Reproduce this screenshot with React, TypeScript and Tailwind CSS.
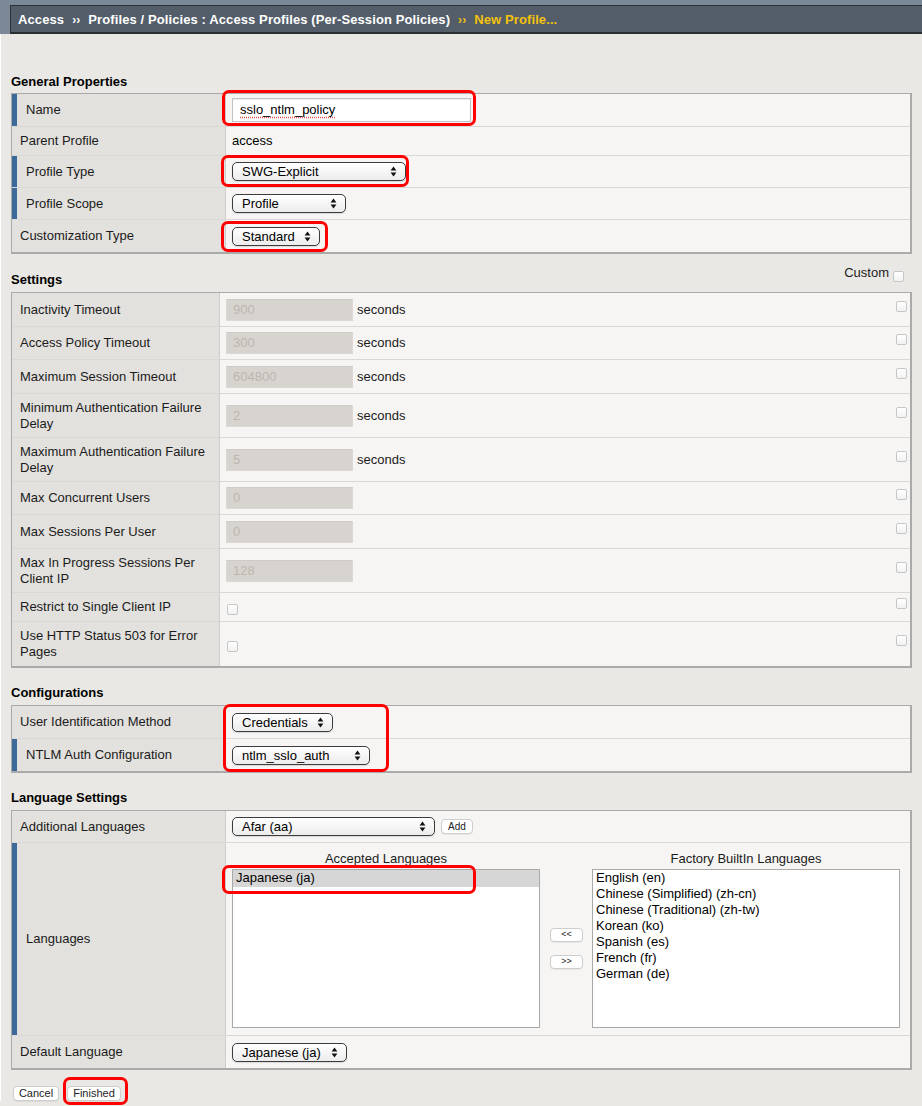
import React from "react";

const Arrows = () => (
  <svg width="7" height="11" viewBox="0 0 7 11" className="shrink-0">
    <path d="M0.6 4.6 L3.5 0.6 L6.4 4.6Z M0.6 6.4 L3.5 10.4 L6.4 6.4Z" fill="#111" />
  </svg>
);

function Select({ value, w }: { value: string; w: string }) {
  return (
    <div
      className={`${w} h-[19px] rounded-[5px] border border-[#3c3c3c] bg-gradient-to-b from-white to-[#ececec] flex items-center justify-between pl-[9px] pr-[8px] shadow-[0_1px_1px_rgba(0,0,0,0.12)]`}
    >
      <span className="leading-none">{value}</span>
      <Arrows />
    </div>
  );
}

const RedBox = ({ cls }: { cls: string }) => (
  <div className={`absolute border-[3px] border-[#ff0000] rounded-[7px] pointer-events-none ${cls}`} />
);

function Row({
  label,
  marked,
  h,
  lw,
  last,
  children,
  valueCls,
}: {
  label: React.ReactNode;
  marked?: boolean;
  h: string;
  lw: string;
  last?: boolean;
  children?: React.ReactNode;
  valueCls?: string;
}) {
  return (
    <div className={`flex ${h} ${last ? "" : "border-b border-[#d8d8d6]"}`}>
      <div
        className={`${lw} shrink-0 bg-[#e2e1dd] border-r border-[#cdcdcb] flex items-center leading-[16px] text-[#1b1b1b] ${
          marked ? "border-l-[5px] border-l-[#3b6a9b] pl-[9px]" : "pl-[8px]"
        }`}
      >
        <div>{label}</div>
      </div>
      <div className={`flex-1 bg-[#f6f5f3] flex pl-[6px] ${valueCls ?? "items-center"}`}>{children}</div>
    </div>
  );
}

const Chk = ({ cls }: { cls?: string }) => (
  <div className={`w-[11px] h-[11px] rounded-[2px] border border-[#c6c6c6] bg-gradient-to-b from-white to-[#f1f1f1] ${cls ?? ""}`} />
);

const Disabled = ({ v, seconds }: { v: string; seconds?: boolean }) => (
  <div className="flex items-center">
    <div className="w-[127px] h-[22px] bg-[#d7d4cf] border border-[#dcd9d4] border-t-[#cfccc7] text-[#bbb7b1] pl-[6px] flex items-center">
      {v}
    </div>
    {seconds && <span className="ml-[4px] text-[#1b1b1b]">seconds</span>}
  </div>
);

const SRow = ({
  label,
  h,
  v,
  seconds,
  last,
  chk,
}: {
  label: React.ReactNode;
  h: string;
  v?: string;
  seconds?: boolean;
  last?: boolean;
  chk?: boolean;
}) => (
  <Row label={label} h={h} lw="w-[208px]" last={last}>
    {v !== undefined && <Disabled v={v} seconds={seconds} />}
    {chk && <Chk cls="ml-[1px] mt-[5px]" />}
    <Chk cls="ml-auto mr-[3px] -mt-[7px]" />
  </Row>
);

const SmallBtn = ({ children, cls }: { children: React.ReactNode; cls: string }) => (
  <div
    className={`${cls} rounded-[4px] border border-[#cdcdcd] bg-white flex items-center justify-center text-[#222] shadow-[0_1px_0_rgba(0,0,0,0.05)]`}
  >
    {children}
  </div>
);

export default function App() {
  const factory = [
    "English (en)",
    "Chinese (Simplified) (zh-cn)",
    "Chinese (Traditional) (zh-tw)",
    "Korean (ko)",
    "Spanish (es)",
    "French (fr)",
    "German (de)",
  ];
  return (
    <div className="w-[922px] min-h-[1106px] bg-[#e9e8e4] font-['Liberation_Sans',Arial,sans-serif] text-[13px] text-black">
      {/* Header */}
      <div className="h-[34px] bg-[#7b8898] pt-[5px] pl-[10px]">
        <div className="h-[29px] bg-[#535e6a] border-t border-l border-[#2e3338] border-b-2 border-b-[#2b2e31] flex items-center pl-[7px] pt-[2px] font-bold text-white text-[13px] tracking-[0.1px] whitespace-nowrap">
          <span>Access</span>
          <span className="mx-[8px] text-[12px]">››</span>
          <span>Profiles / Policies : Access Profiles (Per-Session Policies)</span>
          <span className="mx-[8px] text-[12px] text-[#f4c20d]">››</span>
          <span className="text-[#f4c20d]">New Profile...</span>
        </div>
      </div>

      <div className="border-l border-white">
        {/* General Properties */}
        <div className="pl-[10px] pt-[40px] pb-[3px] font-bold leading-[16px]">General Properties</div>
        <div className="mx-[10px] border border-[#aaaaaa] border-r-2 border-b-2">
          <Row label="Name" marked h="h-[33px]" lw="w-[214px]">
            <div className="relative">
              <div className="w-[239px] h-[24px] bg-white border border-[#c3c3c3] shadow-[inset_0_1px_1px_rgba(0,0,0,0.08)] flex items-center pl-[7px]">
                <span className="underline decoration-dotted decoration-[#e25555] underline-offset-[3px]">sslo_ntlm_policy</span>
              </div>
              <RedBox cls="-left-[10px] -top-[8px] w-[254px] h-[36px]" />
            </div>
          </Row>
          <Row label="Parent Profile" h="h-[29px]" lw="w-[214px]">
            <span>access</span>
          </Row>
          <Row label="Profile Type" marked h="h-[32px]" lw="w-[214px]">
            <div className="relative">
              <Select value="SWG-Explicit" w="w-[174px]" />
              <RedBox cls="-left-[11px] -top-[7px] w-[188px] h-[32px]" />
            </div>
          </Row>
          <Row label="Profile Scope" marked h="h-[32px]" lw="w-[214px]">
            <Select value="Profile" w="w-[114px]" />
          </Row>
          <Row label="Customization Type" h="h-[32px]" lw="w-[214px]" last>
            <div className="relative">
              <Select value="Standard" w="w-[88px]" />
              <RedBox cls="-left-[11px] -top-[6px] w-[107px] h-[31px]" />
            </div>
          </Row>
        </div>

        {/* Settings */}
        <div className="flex justify-between pl-[10px] pr-[18px] pt-[18px] pb-[4px]">
          <div className="font-bold leading-[16px]">Settings</div>
          <div className="flex items-center -mt-[7px] h-[16px]">
            <span className="text-[#1b1b1b]">Custom</span>
            <Chk cls="ml-[4px] mt-[6px]" />
          </div>
        </div>
        <div className="mx-[10px] border border-[#aaaaaa] border-r-2 border-b-2">
          <SRow label="Inactivity Timeout" h="h-[34px]" v="900" seconds />
          <SRow label="Access Policy Timeout" h="h-[33px]" v="300" seconds />
          <SRow label="Maximum Session Timeout" h="h-[34px]" v="604800" seconds />
          <SRow
            label={
              <>
                Minimum Authentication Failure
                <br />
                Delay
              </>
            }
            h="h-[44px]"
            v="2"
            seconds
          />
          <SRow
            label={
              <>
                Maximum Authentication Failure
                <br />
                Delay
              </>
            }
            h="h-[44px]"
            v="5"
            seconds
          />
          <SRow label="Max Concurrent Users" h="h-[33px]" v="0" />
          <SRow label="Max Sessions Per User" h="h-[34px]" v="0" />
          <SRow
            label={
              <>
                Max In Progress Sessions Per
                <br />
                Client IP
              </>
            }
            h="h-[44px]"
            v="128"
          />
          <SRow label="Restrict to Single Client IP" h="h-[29px]" chk />
          <SRow
            label={
              <>
                Use HTTP Status 503 for Error
                <br />
                Pages
              </>
            }
            h="h-[44px]"
            chk
            last
          />
        </div>

        {/* Configurations */}
        <div className="pl-[10px] pt-[17px] pb-[4px] font-bold leading-[16px]">Configurations</div>
        <div className="relative mx-[10px] border border-[#aaaaaa] border-r-2 border-b-2">
          <Row label="User Identification Method" h="h-[33px]" lw="w-[214px]">
            <Select value="Credentials" w="w-[101px]" />
          </Row>
          <Row label="NTLM Auth Configuration" marked h="h-[32px]" lw="w-[214px]" last>
            <Select value="ntlm_sslo_auth" w="w-[138px]" />
          </Row>
          <RedBox cls="left-[211px] -top-[2px] w-[166px] h-[68px]" />
        </div>

        {/* Language Settings */}
        <div className="pl-[10px] pt-[17px] pb-[4px] font-bold leading-[16px]">Language Settings</div>
        <div className="mx-[10px] border border-[#aaaaaa] border-r-2 border-b-2">
          <Row label="Additional Languages" h="h-[32px]" lw="w-[214px]">
            <Select value="Afar (aa)" w="w-[203px]" />
            <SmallBtn cls="ml-[6px] w-[32px] h-[15px] text-[10px]">Add</SmallBtn>
          </Row>
          <Row label="Languages" marked h="h-[193px]" lw="w-[214px]" valueCls="items-start pt-[8px]">
            <div className="w-[308px]">
              <div className="text-center leading-[15px] text-[#1b1b1b]">Accepted Languages</div>
              <div className="relative mt-[3px] h-[159px] bg-white border border-[#a9a9a9]">
                <div className="h-[17px] bg-[#d6d6d6] pl-[3px] leading-[16px]">Japanese (ja)</div>
                <RedBox cls="-left-[11px] -top-[5px] w-[254px] h-[29px]" />
              </div>
            </div>
            <div className="w-[33px] ml-[10px] mt-[77px] flex flex-col gap-[13px]">
              <SmallBtn cls="w-[33px] h-[14px] text-[9px]">&lt;&lt;</SmallBtn>
              <SmallBtn cls="w-[33px] h-[14px] text-[9px]">&gt;&gt;</SmallBtn>
            </div>
            <div className="w-[308px] ml-[9px]">
              <div className="text-center leading-[15px] text-[#1b1b1b]">Factory BuiltIn Languages</div>
              <div className="mt-[3px] h-[159px] bg-white border border-[#a9a9a9] pl-[3px]">
                {factory.map((f) => (
                  <div key={f} className="leading-[16px]">
                    {f}
                  </div>
                ))}
              </div>
            </div>
          </Row>
          <Row label="Default Language" h="h-[32px]" lw="w-[214px]" last>
            <Select value="Japanese (ja)" w="w-[115px]" />
          </Row>
        </div>

        {/* Buttons */}
        <div className="flex pl-[12px] pt-[16px] gap-[8px]">
          <SmallBtn cls="w-[46px] h-[15px] text-[11px]">Cancel</SmallBtn>
          <div className="relative">
            <SmallBtn cls="w-[54px] h-[15px] text-[11px]">Finished</SmallBtn>
            <RedBox cls="-left-[4px] -top-[9px] w-[65px] h-[28px]" />
          </div>
        </div>
      </div>
    </div>
  );
}
